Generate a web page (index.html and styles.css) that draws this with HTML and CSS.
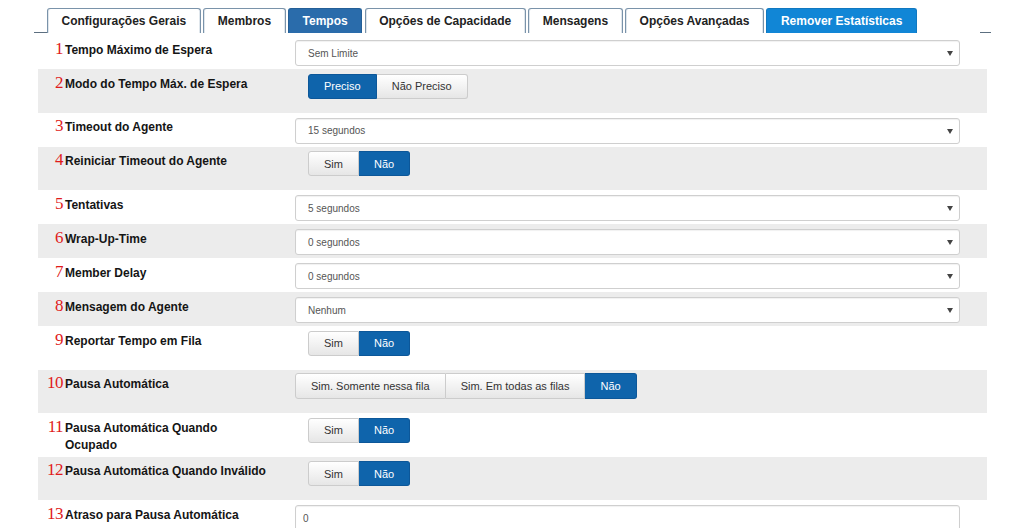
FILE: index.html
```html
<!DOCTYPE html>
<html lang="pt">
<head>
<meta charset="utf-8">
<title>Tempos</title>
<link rel="stylesheet" href="styles.css">
</head>
<body>
<div class="page">
  <nav class="tabs">
    <span class="tabs-edge tabs-edge-left"></span>
    <a class="tab">Configurações Gerais</a>
    <a class="tab">Membros</a>
    <a class="tab tab-active">Tempos</a>
    <a class="tab">Opções de Capacidade</a>
    <a class="tab">Mensagens</a>
    <a class="tab">Opções Avançadas</a>
    <a class="tab tab-danger">Remover Estatísticas</a>
    <span class="tabs-fill"></span>
    <span class="tabs-edge tabs-edge-right"></span>
  </nav>

  <div class="form">
    <div class="row row-select">
      <div class="label"><span class="num">1</span><span class="text">Tempo Máximo de Espera</span></div>
      <div class="control"><div class="select"><span>Sem Limite</span><span class="caret"></span></div></div>
    </div>
    <div class="row row-btn alt">
      <div class="label"><span class="num">2</span><span class="text">Modo do Tempo Máx. de Espera</span></div>
      <div class="control"><div class="btn-group indent"><span class="btn on">Preciso</span><span class="btn">Não Preciso</span></div></div>
    </div>
    <div class="row row-select">
      <div class="label"><span class="num">3</span><span class="text">Timeout do Agente</span></div>
      <div class="control"><div class="select"><span>15 segundos</span><span class="caret"></span></div></div>
    </div>
    <div class="row row-btn alt">
      <div class="label"><span class="num">4</span><span class="text">Reiniciar Timeout do Agente</span></div>
      <div class="control"><div class="btn-group indent"><span class="btn">Sim</span><span class="btn on">Não</span></div></div>
    </div>
    <div class="row row-select">
      <div class="label"><span class="num">5</span><span class="text">Tentativas</span></div>
      <div class="control"><div class="select"><span>5 segundos</span><span class="caret"></span></div></div>
    </div>
    <div class="row row-select alt">
      <div class="label"><span class="num">6</span><span class="text">Wrap-Up-Time</span></div>
      <div class="control"><div class="select"><span>0 segundos</span><span class="caret"></span></div></div>
    </div>
    <div class="row row-select">
      <div class="label"><span class="num">7</span><span class="text">Member Delay</span></div>
      <div class="control"><div class="select"><span>0 segundos</span><span class="caret"></span></div></div>
    </div>
    <div class="row row-select alt">
      <div class="label"><span class="num">8</span><span class="text">Mensagem do Agente</span></div>
      <div class="control"><div class="select"><span>Nenhum</span><span class="caret"></span></div></div>
    </div>
    <div class="row row-btn">
      <div class="label"><span class="num">9</span><span class="text">Reportar Tempo em Fila</span></div>
      <div class="control"><div class="btn-group indent"><span class="btn">Sim</span><span class="btn on">Não</span></div></div>
    </div>
    <div class="row row-btn alt">
      <div class="label"><span class="num">10</span><span class="text">Pausa Automática</span></div>
      <div class="control"><div class="btn-group tall"><span class="btn">Sim. Somente nessa fila</span><span class="btn">Sim. Em todas as filas</span><span class="btn on">Não</span></div></div>
    </div>
    <div class="row row-btn">
      <div class="label"><span class="num">11</span><span class="text">Pausa Automática Quando Ocupado</span></div>
      <div class="control"><div class="btn-group indent"><span class="btn">Sim</span><span class="btn on">Não</span></div></div>
    </div>
    <div class="row row-btn alt">
      <div class="label"><span class="num">12</span><span class="text">Pausa Automática Quando Inválido</span></div>
      <div class="control"><div class="btn-group indent"><span class="btn">Sim</span><span class="btn on">Não</span></div></div>
    </div>
    <div class="row row-select">
      <div class="label"><span class="num">13</span><span class="text">Atraso para Pausa Automática</span></div>
      <div class="control"><div class="input">0</div></div>
    </div>
  </div>
</div>
</body>
</html>
```

FILE: styles.css
```css
html, body {
  margin: 0;
  padding: 0;
  background: #fff;
}

body {
  font-family: "Liberation Sans", Arial, sans-serif;
  color: #111;
  overflow: hidden;
}

.page {
  width: 949px;
  margin-left: 38px;
  padding-top: 7px;
}

/* Tabs */
.tabs {
  display: flex;
  align-items: flex-end;
  margin: 0 -4px 0 -4px;
  height: 26px;
}

.tabs-edge {
  height: 0;
  border-bottom: 1px solid #5c6f80;
  align-self: flex-end;
}

.tabs-edge-left {
  width: 13px;
}

.tabs-edge-right {
  width: 11px;
}

.tabs-fill {
  flex: 1;
}

.tab {
  display: block;
  height: 24px;
  line-height: 25px;
  padding: 0 13.5px;
  margin-right: 2.5px;
  border: 1px solid #7a93aa;
  border-bottom: none;
  border-radius: 3px 3px 0 0;
  font-size: 12px;
  font-weight: bold;
  color: #222;
  background: #fff;
  box-shadow: inset 1px 0 0 #dfe6ec, inset -1px 0 0 #dfe6ec;
  white-space: nowrap;
}

.tab-active {
  background: #2a6cab;
  border-color: #245f97;
  color: #fff;
  box-shadow: none;
}

.tab-danger {
  background: #1186d6;
  border-color: #1078c0;
  color: #fff;
  box-shadow: none;
}

/* Form rows */
.form {
  margin-top: 2px;
}

.row {
  display: flex;
  align-items: flex-start;
  padding: 0 27px 0 8px;
}

.row.alt {
  background: #ececec;
}

.row-select {
  height: 34px;
  box-sizing: border-box;
  padding-top: 5px;
}

.row-btn {
  height: 43.5px;
  box-sizing: border-box;
  padding-top: 4.5px;
}

.label {
  flex: none;
  width: 249px;
  display: flex;
  align-items: baseline;
  line-height: 17px;
  margin-top: -0.5px;
}

.row-btn .label {
  margin-top: 0;
}

.num {
  flex: none;
  width: 17px;
  text-align: right;
  margin-right: 2px;
  font-family: "Liberation Serif", "Times New Roman", serif;
  font-size: 17px;
  color: #e01b1b;
  letter-spacing: -0.5px;
}

.text {
  width: 204px;
  font-size: 12px;
  font-weight: bold;
  color: #151515;
}

.control {
  flex: 1;
  display: flex;
}

/* Select / input */
.select,
.input {
  flex: 1;
  height: 26px;
  box-sizing: border-box;
  border: 1px solid #cfcfcf;
  border-radius: 3px;
  background: #fff;
  box-shadow: inset 0 1px 1px rgba(0, 0, 0, 0.06);
  font-size: 10px;
  color: #555;
  display: flex;
  align-items: center;
}

.select {
  justify-content: space-between;
  padding: 0 6px 0 12px;
}

.input {
  padding: 0 7px;
}

.caret {
  width: 0;
  height: 0;
  border-left: 3px solid transparent;
  border-right: 3px solid transparent;
  border-top: 5px solid #444;
  margin-top: 1px;
}

/* Button groups */
.btn-group {
  display: flex;
  height: 25px;
}

.btn-group.indent {
  margin-left: 13px;
}

.btn-group.tall {
  height: 26px;
  margin-top: -1.5px;
}

.btn {
  display: flex;
  align-items: center;
  padding: 0 15px;
  font-size: 11px;
  color: #333;
  background: linear-gradient(#ffffff, #e6e6e6);
  border: 1px solid #cccccc;
  border-left-width: 0;
  box-sizing: border-box;
  white-space: nowrap;
}

.btn:first-child {
  border-left-width: 1px;
  border-radius: 3px 0 0 3px;
}

.btn:last-child {
  border-radius: 0 3px 3px 0;
}

.btn.on {
  background: #0f64ab;
  border-color: #0c5799;
  color: #fff;
}
```
